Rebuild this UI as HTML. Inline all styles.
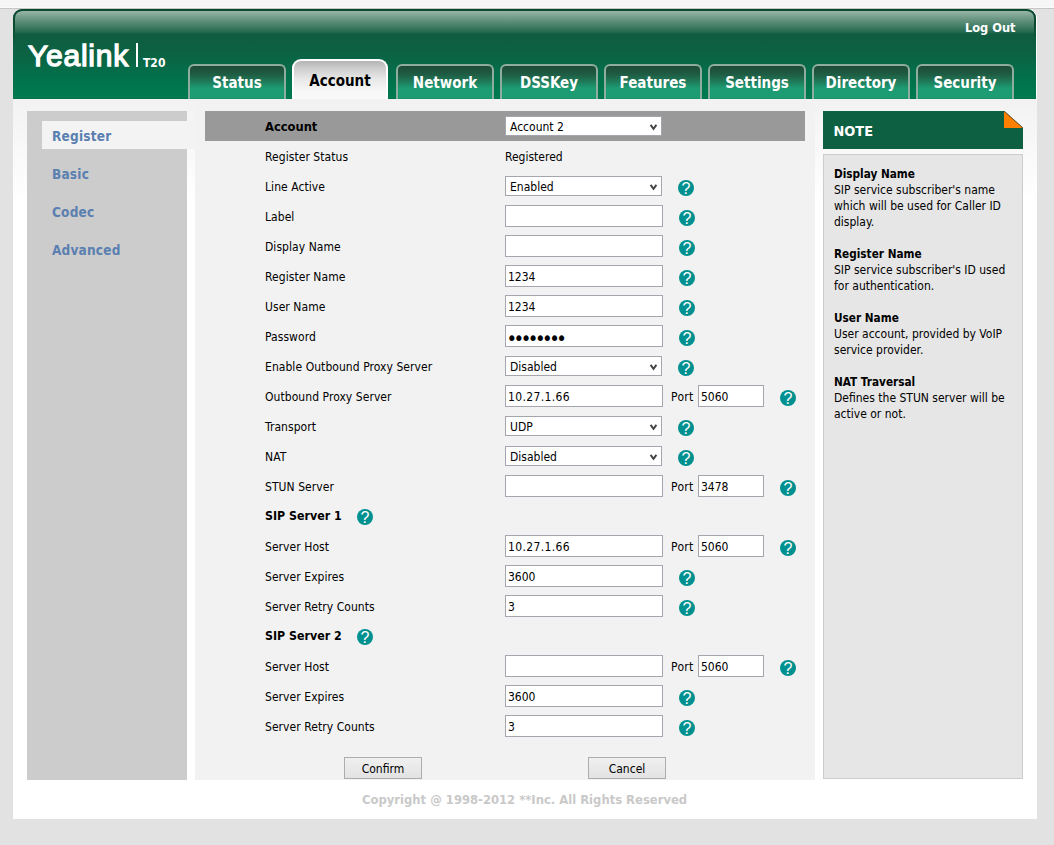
<!DOCTYPE html>
<html>
<head>
<meta charset="utf-8">
<title>Yealink T20 - Account</title>
<style>
*{box-sizing:border-box;margin:0;padding:0}
html,body{width:1054px;height:845px;overflow:hidden}
body{background:#e2e2e2;font-family:"DejaVu Sans Condensed","Liberation Sans",sans-serif;font-size:12px;color:#000;position:relative}
.abs{position:absolute}
#topstrip{left:0;top:0;width:1054px;height:9px;background:#f6f6f6;border-bottom:1px solid #c6c6c6;box-shadow:inset 0 -1px 0 #fafafa}
#page{left:13px;top:9px;width:1024px;height:810px;background:#fff;border-radius:9px 9px 0 0}
#fade{left:13px;top:99px;width:1024px;height:100px;background:linear-gradient(#f2f2f2,#fff)}
#header{left:13px;top:9px;width:1023px;height:90px;border-radius:9px 9px 0 0;border-top:2px solid #0b4a31;
 background:linear-gradient(#97b6a7 0px,#5f8f7a 10px,#246a50 21px,#105c40 23px,#0c6243 42px,#00744d 72px,#007a50 86px,#007a50 87px,#006a45 88px)}
#hedge{left:13px;top:9px;width:1023px;height:34px;border:2px solid #0b4a31;border-bottom:none;border-radius:9px 9px 0 0;-webkit-mask-image:linear-gradient(#000 55%,transparent);mask-image:linear-gradient(#000 55%,transparent)}
#logo{left:28px;top:39px;font:30px/34px "Liberation Sans",sans-serif;color:#fff;letter-spacing:.75px;-webkit-text-stroke:1.3px #fff}
#logobar{left:136px;top:43px;width:2px;height:24px;background:#fff}
#model{left:143px;top:56px;font:bold 12px/14px "DejaVu Sans Condensed","Liberation Sans",sans-serif;color:#fff}
#logout{left:965px;top:20px;font:bold 12.7px/16px "DejaVu Sans Condensed","Liberation Sans",sans-serif;color:#fff}
.tab{position:absolute;top:64px;height:35px;width:98px;border:2px solid #8fad9f;border-bottom:none;border-radius:6px 6px 0 0;
 background:linear-gradient(#1e4a37 0px,#1f5b43 8px,#1f7857 15px,#1d9b73 22px,#1d9b73 32px,#198a66 33px);
 color:#fff;font:bold 15px/18px "DejaVu Sans Condensed","Liberation Sans",sans-serif;text-align:center;padding-top:8px}
.tab.on{top:59px;height:40px;width:96px;border:2px solid #fff;border-bottom:none;border-radius:9px 9px 0 0;
 background:linear-gradient(#b4b4b4 0px,#cfcfcf 8px,#e8e8e8 18px,#f7f7f7 30px,#fafafa 40px);color:#000;padding-top:11px}
#side{left:27px;top:111px;width:160px;height:669px;background:#ccc}
#sideon{left:42px;top:121px;width:153px;height:28px;background:#f3f3f3}
.sl{position:absolute;left:52px;font:bold 13.5px/18px "DejaVu Sans Condensed","Liberation Sans",sans-serif;color:#5a7fb0;letter-spacing:.2px}
#content{left:195px;top:99px;width:620px;height:681px;background:#f2f2f2}
#bar{left:205px;top:111px;width:600px;height:30px;background:#999}
.lb{position:absolute;left:265px;font-size:12px;line-height:16px;white-space:nowrap;letter-spacing:.06px}
.b{font-weight:bold}
.val{position:absolute;left:505px;font-size:12px;line-height:16px}
.in{position:absolute;left:505px;width:158px;height:22px;background:#fff;border:1px solid #a5a5ad;font-size:12px;line-height:20px;padding:1px 0 0 2px;white-space:nowrap;overflow:hidden}
.pin{position:absolute;left:698px;width:66px;height:22px;background:#fff;border:1px solid #a5a5ad;font-size:12px;line-height:20px;padding:1px 0 0 2px}
.pl{position:absolute;left:671px;font-size:12px;line-height:16px;letter-spacing:.3px}
.sel{position:absolute;left:505px;width:157px;height:20px;background:#fff;border:1px solid #a5a5ad;font-size:12px;line-height:18px;padding:1px 0 0 4px;white-space:nowrap}
.sel svg{position:absolute;right:3px;top:7px}
.q{position:absolute;width:16px;height:16px;border-radius:50%;background:#00908f;color:#fff;font:16px/18px "Liberation Sans",sans-serif;text-align:center;overflow:hidden}
.btn{position:absolute;top:757px;width:78px;height:22px;border:1px solid #adadad;background:linear-gradient(#f0f0f0,#e2e2e2);font-size:12px;line-height:20px;text-align:center;padding-top:1px}
#foot{left:362px;top:792px;font:bold 12.9px/16px "DejaVu Sans Condensed","Liberation Sans",sans-serif;color:#c9c9c9;white-space:nowrap}
#noteh{left:823px;top:111px;width:200px;height:38px;background:#0e6042;color:#fff;font:bold 14.4px/18px "DejaVu Sans Condensed","Liberation Sans",sans-serif;padding:11px 0 0 10.5px;clip-path:polygon(0 0,181px 0,200px 17px,200px 100%,0 100%)}
#noteb{left:823px;top:154px;width:200px;height:625px;background:#e6e6e6;border:1px solid #ccc;padding:11px 0 0 10px;font-size:12px;line-height:16px}
#noteb p{margin-bottom:16px;white-space:nowrap}
#noteb b{font-size:11.7px}
</style>
</head>
<body>
<div class="abs" id="topstrip"></div>
<div class="abs" id="page"></div>
<div class="abs" id="fade"></div>
<div class="abs" id="header"></div>
<div class="abs" id="hedge"></div>
<div class="abs" id="logo">Yealink</div>
<div class="abs" id="logobar"></div>
<div class="abs" id="model">T20</div>
<div class="abs" id="logout">Log Out</div>

<div class="tab" style="left:188px">Status</div>
<div class="tab on" style="left:292px">Account</div>
<div class="tab" style="left:396px">Network</div>
<div class="tab" style="left:500px">DSSKey</div>
<div class="tab" style="left:604px">Features</div>
<div class="tab" style="left:708px">Settings</div>
<div class="tab" style="left:812px">Directory</div>
<div class="tab" style="left:916px">Security</div>

<div class="abs" id="content"></div>
<div class="abs" id="side"></div>
<div class="abs" id="sideon"></div>
<div class="sl" style="top:127px">Register</div>
<div class="sl" style="top:165px">Basic</div>
<div class="sl" style="top:203px">Codec</div>
<div class="sl" style="top:241px">Advanced</div>

<div class="abs" id="bar"></div>
<!--FORM-->
<div class="lb b" style="top:119px;font-size:12.8px;letter-spacing:0">Account</div>
<div class="sel" style="top:116px">Account 2<svg width="9" height="8" viewBox="0 0 9 8"><path d="M1.6 .9l2.9 3.9 2.9-3.9" fill="none" stroke="#444" stroke-width="2"/></svg></div>
<div class="lb" style="top:149px">Register Status</div>
<div class="val" style="top:149px">Registered</div>
<div class="lb" style="top:179px">Line Active</div>
<div class="sel" style="top:176px">Enabled<svg width="9" height="8" viewBox="0 0 9 8"><path d="M1.6 .9l2.9 3.9 2.9-3.9" fill="none" stroke="#444" stroke-width="2"/></svg></div>
<div class="q" style="left:678px;top:180px">?</div>
<div class="lb" style="top:209px">Label</div>
<div class="in" style="top:205px"></div>
<div class="q" style="left:679px;top:210px">?</div>
<div class="lb" style="top:239px">Display Name</div>
<div class="in" style="top:235px"></div>
<div class="q" style="left:679px;top:240px">?</div>
<div class="lb" style="top:269px">Register Name</div>
<div class="in" style="top:265px">1234</div>
<div class="q" style="left:679px;top:270px">?</div>
<div class="lb" style="top:299px">User Name</div>
<div class="in" style="top:295px">1234</div>
<div class="q" style="left:679px;top:300px">?</div>
<div class="lb" style="top:329px">Password</div>
<div class="in" style="top:325px;font-size:20px;letter-spacing:-3.5px;line-height:22px;padding-left:0;text-indent:.5px">••••••••</div>
<div class="q" style="left:679px;top:330px">?</div>
<div class="lb" style="top:359px">Enable Outbound Proxy Server</div>
<div class="sel" style="top:356px">Disabled<svg width="9" height="8" viewBox="0 0 9 8"><path d="M1.6 .9l2.9 3.9 2.9-3.9" fill="none" stroke="#444" stroke-width="2"/></svg></div>
<div class="q" style="left:678px;top:360px">?</div>
<div class="lb" style="top:389px">Outbound Proxy Server</div>
<div class="in" style="top:385px;letter-spacing:.35px">10.27.1.66</div>
<div class="pl" style="top:389px">Port</div>
<div class="pin" style="top:385px">5060</div>
<div class="q" style="left:780px;top:390px">?</div>
<div class="lb" style="top:419px">Transport</div>
<div class="sel" style="top:416px">UDP<svg width="9" height="8" viewBox="0 0 9 8"><path d="M1.6 .9l2.9 3.9 2.9-3.9" fill="none" stroke="#444" stroke-width="2"/></svg></div>
<div class="q" style="left:678px;top:420px">?</div>
<div class="lb" style="top:449px">NAT</div>
<div class="sel" style="top:446px">Disabled<svg width="9" height="8" viewBox="0 0 9 8"><path d="M1.6 .9l2.9 3.9 2.9-3.9" fill="none" stroke="#444" stroke-width="2"/></svg></div>
<div class="q" style="left:678px;top:450px">?</div>
<div class="lb" style="top:479px">STUN Server</div>
<div class="in" style="top:475px"></div>
<div class="pl" style="top:479px">Port</div>
<div class="pin" style="top:475px">3478</div>
<div class="q" style="left:780px;top:480px">?</div>
<div class="lb b" style="top:508px;font-size:12.3px;letter-spacing:0">SIP Server 1</div>
<div class="q" style="left:357px;top:509px">?</div>
<div class="lb" style="top:539px">Server Host</div>
<div class="in" style="top:535px;letter-spacing:.35px">10.27.1.66</div>
<div class="pl" style="top:539px">Port</div>
<div class="pin" style="top:535px">5060</div>
<div class="q" style="left:780px;top:540px">?</div>
<div class="lb" style="top:569px">Server Expires</div>
<div class="in" style="top:565px">3600</div>
<div class="q" style="left:679px;top:570px">?</div>
<div class="lb" style="top:599px">Server Retry Counts</div>
<div class="in" style="top:595px">3</div>
<div class="q" style="left:679px;top:600px">?</div>
<div class="lb b" style="top:628px;font-size:12.3px;letter-spacing:0">SIP Server 2</div>
<div class="q" style="left:357px;top:629px">?</div>
<div class="lb" style="top:659px">Server Host</div>
<div class="in" style="top:655px"></div>
<div class="pl" style="top:659px">Port</div>
<div class="pin" style="top:655px">5060</div>
<div class="q" style="left:780px;top:660px">?</div>
<div class="lb" style="top:689px">Server Expires</div>
<div class="in" style="top:685px">3600</div>
<div class="q" style="left:679px;top:690px">?</div>
<div class="lb" style="top:719px">Server Retry Counts</div>
<div class="in" style="top:715px">3</div>
<div class="q" style="left:679px;top:720px">?</div>
<!--/FORM-->

<div class="btn" style="left:344px">Confirm</div>
<div class="btn" style="left:588px">Cancel</div>
<div class="abs" id="foot">Copyright @ 1998-2012 **Inc. All Rights Reserved</div>

<div class="abs" id="noteh">NOTE</div>
<svg class="abs" style="left:1004px;top:111px" width="19" height="17" viewBox="0 0 19 17"><path d="M0 0L19 17H0z" fill="#ff7f00"/><path d="M0 0L19 17" stroke="#4d3a1e" stroke-width=".8" fill="none"/></svg>
<div class="abs" id="noteb">
<p><b>Display Name</b><br>SIP service subscriber's name<br>which will be used for Caller ID<br>display.</p>
<p><b>Register Name</b><br>SIP service subscriber's ID used<br>for authentication.</p>
<p><b>User Name</b><br>User account, provided by VoIP<br>service provider.</p>
<p><b>NAT Traversal</b><br>Defines the STUN server will be<br>active or not.</p>
</div>
</body>
</html>
